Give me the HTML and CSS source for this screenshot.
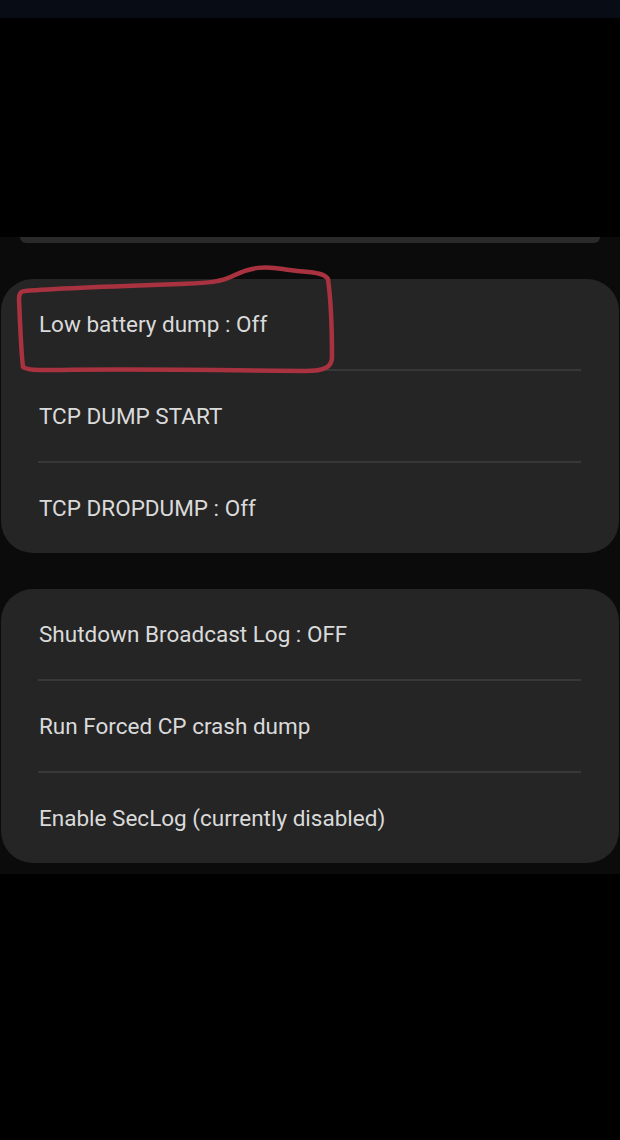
FILE: index.html
```html
<!DOCTYPE html>
<html>
<head>
    <title>Debug Menu</title>
    <link rel="stylesheet" href="styles.css">
</head>
<body>
    <div class="status-bar"></div>
    <div class="blank"></div>
    <div class="screen">
        <div class="prev-card"></div>

        <div class="card">
            <div class="row highlighted">
                Low battery dump : Off
                <svg class="marker" width="340" height="120" viewBox="0 0 340 120">
                    <path d="M24 30 C60 27 120 25 180 23 C205 22 218 22 234 14 C250 6 264 5 282 8 C305 12 322 10 327 18 C330 40 331 70 331 96 C331 106 324 110 304 110 C220 109 120 108 60 109 C40 109 28 110 22 106 C20 90 19 60 18 38 C18 32 20 30 24 30 Z"
                          fill="none" stroke="#a8323f" stroke-width="4.5" stroke-linejoin="round"/>
                </svg>
            </div>
            <div class="divider"></div>
            <div class="row">TCP DUMP START</div>
            <div class="divider"></div>
            <div class="row">TCP DROPDUMP : Off</div>
        </div>

        <div class="card">
            <div class="row">Shutdown Broadcast Log : OFF</div>
            <div class="divider"></div>
            <div class="row">Run Forced CP crash dump</div>
            <div class="divider"></div>
            <div class="row">Enable SecLog (currently disabled)</div>
        </div>
    </div>
</body>
</html>
```

FILE: styles.css
```css
body {
    margin: 0;
    background-color: #000;
    font-family: Roboto, "Liberation Sans", sans-serif;
}

.status-bar {
    height: 18px;
    background-color: #080c14;
}

.blank {
    height: 219px;
}

.screen {
    background-color: #0b0b0b;
    padding-bottom: 11px;
}

.prev-card {
    height: 6px;
    margin: 0 20px;
    background-color: #2a2a2a;
    border-radius: 0 0 14px 14px;
}

.card {
    margin: 36px 1px 0 1px;
    background-color: #252525;
    border-radius: 32px;
}

.row {
    position: relative;
    height: 90px;
    display: flex;
    align-items: center;
    padding-left: 38px;
    font-size: 22.5px;
    color: #dadada;
}

.divider {
    height: 2px;
    margin: 0 38px 0 37px;
    background-color: #383838;
}

.marker {
    position: absolute;
    left: 0;
    top: -18px;
}
```
